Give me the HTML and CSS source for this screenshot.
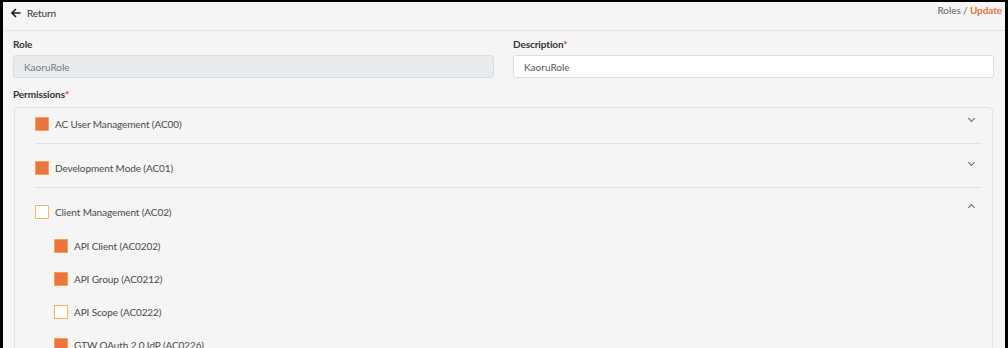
FILE: index.html
```html
<!DOCTYPE html>
<html lang="en">
<head>
  <meta charset="UTF-8">
  <title>Roles - Update</title>
  <link rel="stylesheet" href="styles.css">
</head>
<body>
  <div class="frame">
    <div class="topbar">
      <a class="back" href="#">
        <svg width="10" height="10" viewBox="0 0 10 10"><path d="M5 1 L1 5 L5 9 M1 5 H9.5" fill="none" stroke="#222" stroke-width="1.6"/></svg>
        <span>Return</span>
      </a>
      <div class="crumbs">Roles / <b>Update</b></div>
    </div>

    <div class="form-row">
      <div class="field">
        <label>Role</label>
        <input class="input" type="text" value="KaoruRole" disabled>
      </div>
      <div class="field">
        <label>Description<span class="req">*</span></label>
        <input class="input" type="text" value="KaoruRole">
      </div>
    </div>

    <div class="perm-label">Permissions<span class="req">*</span></div>
    <div class="perm-box">
      <div class="perm">
        <div class="perm-head">
          <span class="check on"></span>
          <span class="name">AC User Management (AC00)</span>
          <span class="chev down"></span>
        </div>
      </div>
      <div class="perm">
        <div class="perm-head">
          <span class="check on"></span>
          <span class="name">Development Mode (AC01)</span>
          <span class="chev down"></span>
        </div>
      </div>
      <div class="perm open">
        <div class="perm-head">
          <span class="check"></span>
          <span class="name">Client Management (AC02)</span>
          <span class="chev up"></span>
        </div>
        <div class="sub">
          <div class="sub-row"><span class="check on"></span><span class="name">API Client (AC0202)</span></div>
          <div class="sub-row"><span class="check on"></span><span class="name">API Group (AC0212)</span></div>
          <div class="sub-row"><span class="check"></span><span class="name">API Scope (AC0222)</span></div>
          <div class="sub-row"><span class="check on"></span><span class="name">GTW OAuth 2.0 IdP (AC0226)</span></div>
        </div>
      </div>
    </div>
  </div>
</body>
</html>
```

FILE: styles.css
```css
html, body {
  margin: 0;
  height: 100%;
  background-color: #000;
  overflow: hidden;
}

.frame {
  box-sizing: border-box;
  height: 100%;
  margin: 2px 3px 0 3px;
  background-color: #f5f5f5;
  font-family: Lato, "Open Sans", sans-serif;
  font-size: 10px;
  letter-spacing: -0.1px;
  color: #4a4a4a;
  overflow: hidden;
}

.topbar {
  display: flex;
  justify-content: space-between;
  align-items: flex-start;
  height: 28px;
  margin: 0 0 0 2px;
  border-bottom: 1px solid #e2e2e2;
}

.back {
  display: flex;
  align-items: center;
  gap: 6px;
  margin: 5px 0 0 6px;
  color: #333;
  text-decoration: none;
}

.crumbs {
  margin: 2px 3px 0 0;
  color: #666;
}

.crumbs b {
  color: #ec7038;
}

.form-row {
  display: grid;
  grid-template-columns: 481px 481px;
  gap: 19px;
  padding: 7px 0 0 10px;
}

.field label {
  display: block;
  font-weight: bold;
  color: #333;
  margin-bottom: 5px;
}

.input {
  box-sizing: border-box;
  width: 100%;
  height: 23px;
  padding: 0 10px;
  border: 1px solid #dcdcdc;
  border-radius: 3px;
  background-color: #fff;
  font-family: inherit;
  font-size: 10px;
  color: #555;
}

.input:disabled {
  background-color: #e9ecef;
  color: #777;
}

.req {
  color: #d9342b;
}

.perm-label {
  font-weight: bold;
  color: #333;
  margin: 10px 0 7px 10px;
}

.perm-box {
  width: 979px;
  height: 400px;
  margin-left: 11px;
  box-sizing: border-box;
  border: 1px solid #e2e2e2;
  border-radius: 4px;
  padding: 0 10px 0 20px;
}

.perm {
  border-bottom: 1px solid #e0e0e0;
  padding: 8px 0 3px;
}

.perm:first-child {
  padding-top: 0;
}

.perm.open {
  border-bottom: none;
}

.perm-head {
  display: flex;
  align-items: center;
  height: 32px;
}

.check {
  box-sizing: border-box;
  width: 14px;
  height: 14px;
  flex: none;
  border: 1px solid #f2b56c;
  background-color: #fff;
  margin-right: 6px;
}

.check.on {
  background-color: #ea7540;
  border-color: #f4a24f;
}

.name {
  flex: 1;
}

.chev {
  width: 4px;
  height: 4px;
  border-right: 1.2px solid #666;
  border-bottom: 1.2px solid #666;
  margin-right: 8px;
}

.chev.down {
  transform: rotate(45deg);
  margin-top: -12px;
}

.chev.up {
  transform: rotate(-135deg);
  margin-top: -10px;
}

.sub {
  padding: 1px 0 0 19px;
}

.sub-row {
  display: flex;
  align-items: center;
  height: 33px;
}
```
